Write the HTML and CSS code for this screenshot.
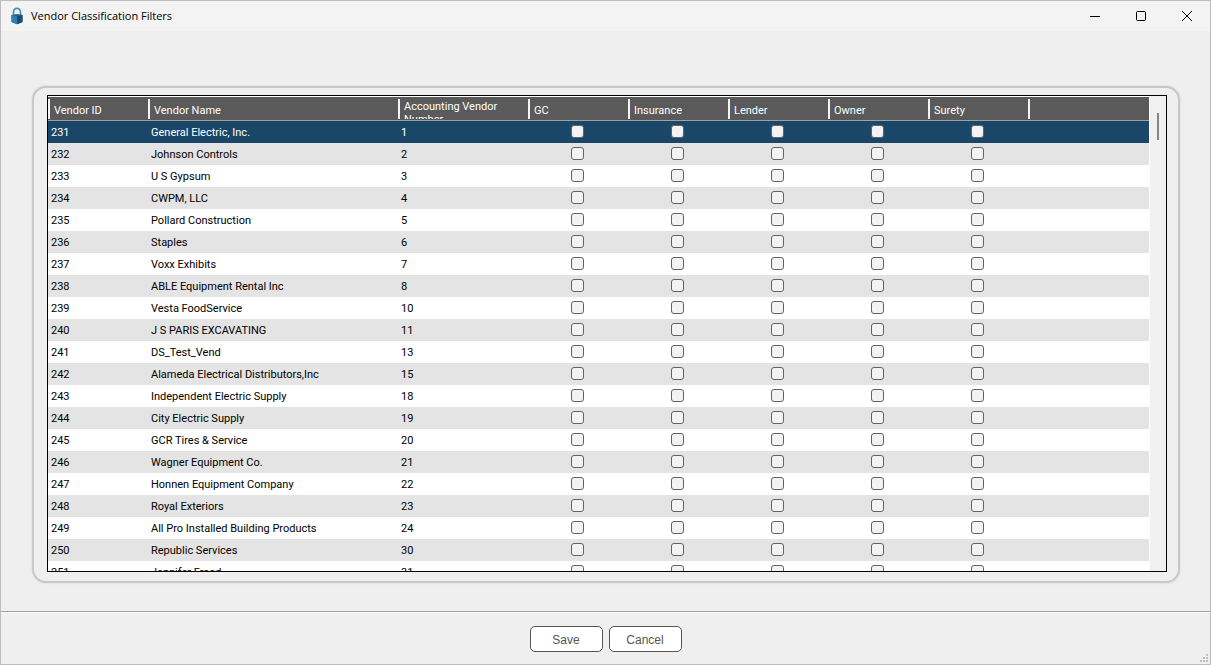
FILE: index.html
```html
<!DOCTYPE html>
<html lang="en">
<head>
<meta charset="utf-8">
<title>Vendor Classification Filters</title>
<link rel="stylesheet" href="styles.css">
</head>
<body>
<div class="window">
  <header class="titlebar">
    <svg class="app-icon" viewBox="0 0 12 18" aria-hidden="true">
      <path d="M2.500 9V5a3.500 3.700 0 0 1 7 0V9" fill="none" stroke="#4d8db3" stroke-width="1.700"/>
      <path d="M.5 8 6 7l5.500 1v7L6 17.200.5 15z" fill="#1f6390"/>
      <path d="M.5 8 6 9.400v7.800L.5 15z" fill="#2f7fb0"/>
      <path d="M6 9.400 11.500 8v7L6 17.200z" fill="#174d74"/>
    </svg>
    <h1 class="title">Vendor Classification Filters</h1>
    <div class="window-controls">
      <button class="window-button" type="button" aria-label="Minimize"><svg viewBox="0 0 12 12"><path d="M1 6.500h10" /></svg></button>
      <button class="window-button" type="button" aria-label="Maximize"><svg viewBox="0 0 12 12"><rect x="1.500" y="1.500" width="9" height="9" rx="1"/></svg></button>
      <button class="window-button" type="button" aria-label="Close"><svg viewBox="0 0 12 12"><path d="M1 1l10 10M11 1L1 11"/></svg></button>
    </div>
  </header>
  <main class="content">
    <section class="panel">
      <div class="grid">
        <div class="grid-view">
          <table class="vendors">
            <colgroup>
              <col class="col-id"><col class="col-name"><col class="col-number">
              <col class="col-flag"><col class="col-flag"><col class="col-flag"><col class="col-flag"><col class="col-flag"><col>
            </colgroup>
            <thead>
              <tr>
                <th scope="col"><div class="head-label">Vendor ID</div></th>
                <th scope="col"><div class="head-label">Vendor Name</div></th>
                <th scope="col"><div class="head-label head-label-wrapped">Accounting Vendor Number</div></th>
                <th scope="col"><div class="head-label">GC</div></th>
                <th scope="col"><div class="head-label">Insurance</div></th>
                <th scope="col"><div class="head-label">Lender</div></th>
                <th scope="col"><div class="head-label">Owner</div></th>
                <th scope="col"><div class="head-label">Surety</div></th>
                <th><div class="head-label"></div></th>
              </tr>
            </thead>
            <tbody id="vendor-rows"></tbody>
          </table>
        </div>
        <div class="scrollbar"><div class="scroll-thumb"></div></div>
      </div>
    </section>
  </main>
  <footer class="actions">
    <button class="action" type="button">Save</button>
    <button class="action" type="button">Cancel</button>
    <svg class="size-grip" viewBox="0 0 8 8" aria-hidden="true"><path d="M6 0h2v2h-2zM3 3h2v2h-2zM6 3h2v2h-2zM0 6h2v2h-2zM3 6h2v2h-2zM6 6h2v2h-2z"/></svg>
  </footer>
</div>
<script src="script.js"></script>
</body>
</html>
```
FILE: styles.css
```css
* { box-sizing: border-box; }

body {
  margin: 0;
  font-family: Roboto, "Liberation Sans", Arial, sans-serif;
  font-size: 11px;
  color: #000;
}

.window {
  display: flex;
  flex-direction: column;
  height: 100vh;
  border: 1px solid #bdbdbd;
  background: #efefef;
}

.titlebar {
  display: flex;
  flex: none;
  align-items: center;
  height: 30px;
  padding-left: 10px;
  background: #f3f3f3;
}

.app-icon { width: 12px; height: 18px; }

.title {
  flex: 1;
  margin: 0 0 0 8px;
  font: 400 11px/16px "Open Sans", "Noto Sans", sans-serif;
}

.window-controls { display: flex; }

.window-button {
  display: grid;
  place-items: center;
  width: 46px;
  height: 30px;
  padding: 0;
  border: 0;
  background: transparent;
}

.window-button svg {
  width: 12px;
  height: 12px;
  fill: none;
  stroke: #000;
}

.content {
  display: flex;
  flex: 1;
  min-height: 0;
  padding: 55px 30px 28px 31px;
}

.panel {
  display: flex;
  flex: 1;
  min-width: 0;
  padding: 7px 11px 9px 13px;
  border: 2px solid #c8c8c8;
  border-radius: 14px;
  box-shadow: 0 0 2px #ccc;
}

.grid {
  display: flex;
  flex: 1;
  min-width: 0;
  border: 1px solid #000;
  background: #fff;
}

.grid-view {
  flex: 1;
  min-width: 0;
  overflow: hidden;
}

.scrollbar {
  width: 16px;
  margin-left: 1px;
  padding: 17px 7px;
  background: #f0f0f0;
}

.scroll-thumb {
  width: 2px;
  height: 27px;
  background: #868686;
}

.vendors {
  width: 100%;
  table-layout: fixed;
  border-collapse: separate;
  border-spacing: 0;
}

.col-id, .col-flag { width: 100px; }
.col-name { width: 250px; }
.col-number { width: 130px; }

.vendors th {
  height: 25px;
  padding: 2px 0 1px;
  border-top: 1px solid #fff;
  border-bottom: 1px solid #a0a0a0;
  background: #5a5a5a;
  color: #fff;
  font-weight: 400;
  text-align: left;
}

.head-label {
  height: 21px;
  padding-left: 4px;
  border-left: 2px solid #f4f4f4;
  line-height: 24px;
  overflow: hidden;
}

.head-label-wrapped {
  padding-top: 1px;
  padding-right: 20px;
  line-height: 13px;
}

.vendors td {
  height: 22px;
  padding: 2px 3px 0;
  line-height: 20px;
  white-space: nowrap;
}

.vendors tbody tr:nth-child(even) { background: #e4e4e4; }

.vendors tbody .selected {
  background: #1a4768;
  color: #fff;
}

.vendors .flag {
  padding: 0 4px 2px 2px;
  line-height: 0;
  text-align: center;
}

.check {
  appearance: none;
  width: 13px;
  height: 13px;
  margin: 0;
  border: 1px solid #626262;
  border-radius: 3px;
  background: #f3f3f3;
  vertical-align: middle;
}

/* The top border of the grid view's header sits directly under the frame. */
.grid-view thead .head-label { height: 20px; }

.actions {
  position: relative;
  display: flex;
  flex: none;
  justify-content: center;
  gap: 6px;
  padding: 14px 0 12px;
  border-top: 1px solid #a0a0a0;
  box-shadow: inset 0 1px #fff;
}

.action {
  width: 73px;
  height: 26px;
  padding: 1px 0 0;
  border: 1px solid #555;
  border-radius: 5px;
  background: #fff;
  color: #555;
  font: 12px "Liberation Sans", Arial, sans-serif;
}

.size-grip {
  position: absolute;
  right: 2px;
  bottom: 2px;
  width: 8px;
  height: 8px;
  fill: #bfbfbf;
}
```
FILE: script.js
```js
const vendors = [
  [231, "General Electric, Inc.", 1],
  [232, "Johnson Controls", 2],
  [233, "U S Gypsum", 3],
  [234, "CWPM, LLC", 4],
  [235, "Pollard Construction", 5],
  [236, "Staples", 6],
  [237, "Voxx Exhibits", 7],
  [238, "ABLE Equipment Rental Inc", 8],
  [239, "Vesta FoodService", 10],
  [240, "J S PARIS EXCAVATING", 11],
  [241, "DS_Test_Vend", 13],
  [242, "Alameda Electrical Distributors,Inc", 15],
  [243, "Independent Electric Supply", 18],
  [244, "City Electric Supply", 19],
  [245, "GCR Tires & Service", 20],
  [246, "Wagner Equipment Co.", 21],
  [247, "Honnen Equipment Company", 22],
  [248, "Royal Exteriors", 23],
  [249, "All Pro Installed Building Products", 24],
  [250, "Republic Services", 30],
  [251, "Jennifer Fraad", 31]
];
const flags = ["GC", "Insurance", "Lender", "Owner", "Surety"];
const body = document.getElementById("vendor-rows");

vendors.forEach((vendor, index) => {
  const row = body.insertRow();
  if (index === 0) row.className = "selected";
  vendor.forEach(value => { row.insertCell().textContent = value; });
  flags.forEach(flag => {
    const cell = row.insertCell();
    cell.className = "flag";
    const check = document.createElement("input");
    check.type = "checkbox";
    check.className = "check";
    check.setAttribute("aria-label", `${flag} for ${vendor[1]}`);
    cell.append(check);
  });
  row.insertCell();
});
```
